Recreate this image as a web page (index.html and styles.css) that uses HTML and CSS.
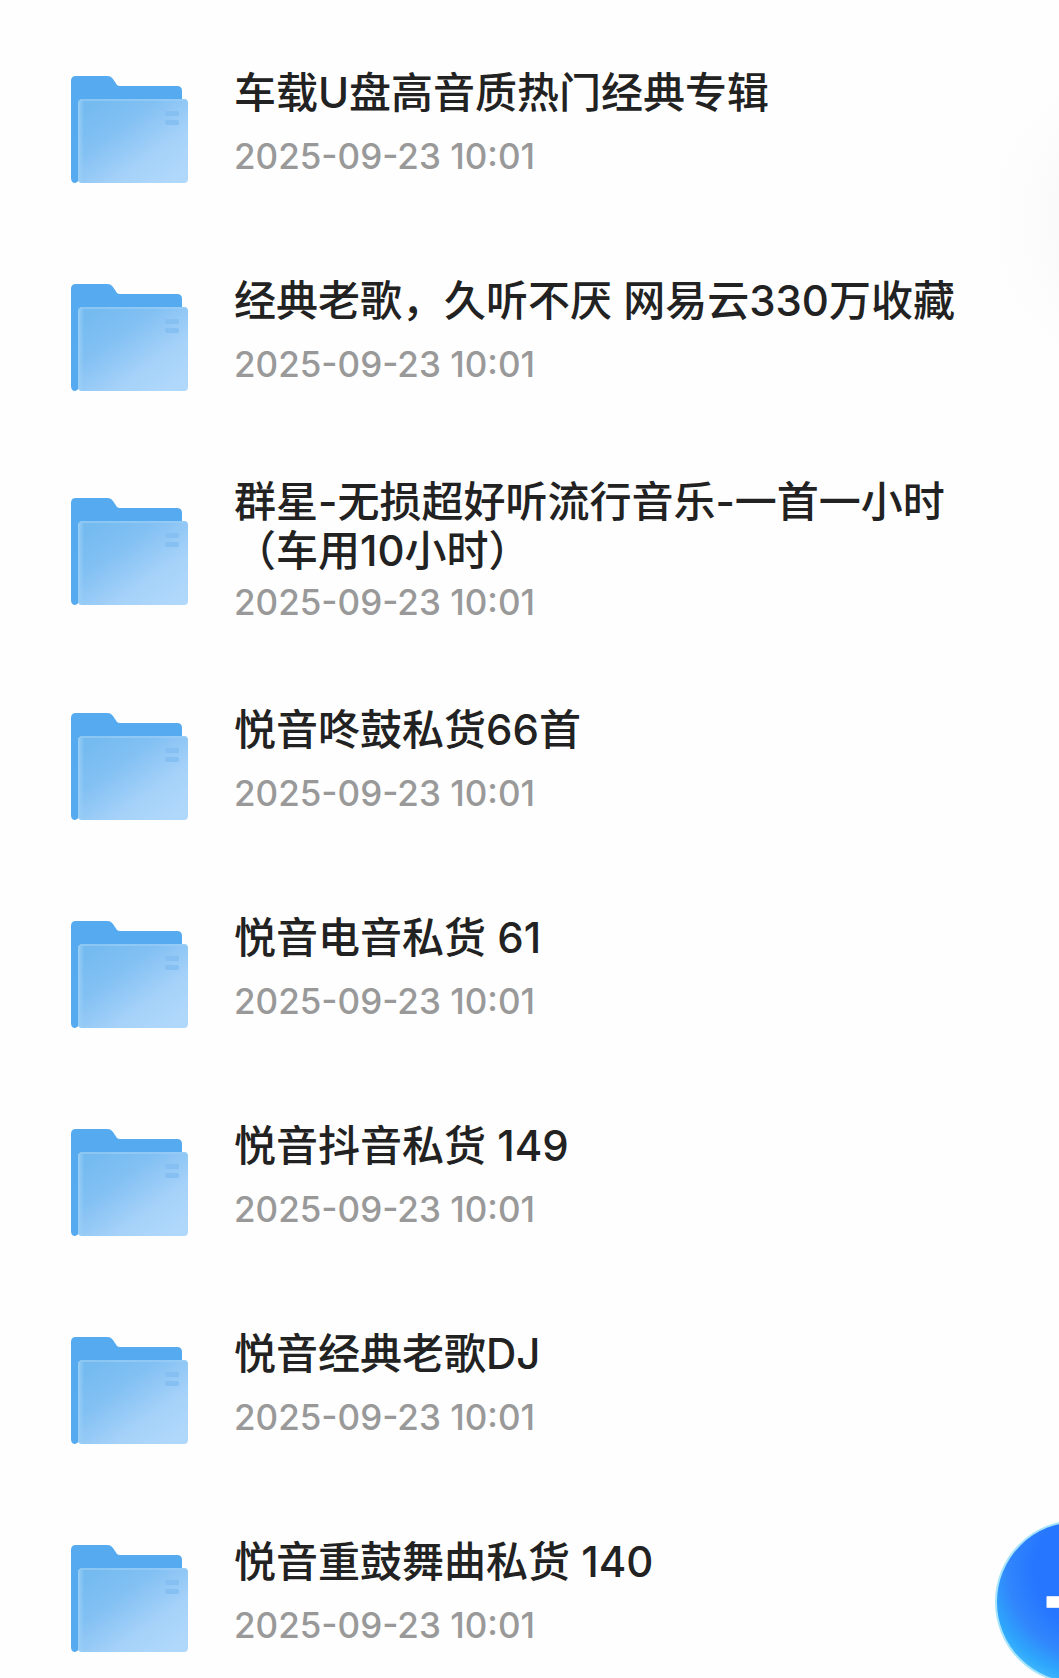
FILE: index.html
```html
<!DOCTYPE html>
<html lang="zh-CN">
<head>
  <meta charset="UTF-8">
  <meta name="viewport" content="width=device-width, initial-scale=1.0">
  <title>我的文件</title>
  <link rel="stylesheet" href="styles.css">
</head>
<body>
  <!-- Folder icon, reused by every row -->
  <svg class="sprite" aria-hidden="true">
    <defs>
      <linearGradient id="front" x1="0.05" y1="0.15" x2="0.85" y2="1">
        <stop offset="0" stop-color="#75bbf0"/>
        <stop offset="0.3" stop-color="#82c0f3"/>
        <stop offset="0.7" stop-color="#a6d2f9"/>
        <stop offset="1" stop-color="#b0d8fb"/>
      </linearGradient>
      <linearGradient id="edge" x1="0" y1="0" x2="1" y2="0">
        <stop offset="0" stop-color="#9bcff6"/>
        <stop offset="1" stop-color="#9bcff6" stop-opacity="0"/>
      </linearGradient>
    </defs>
    <symbol id="folder" viewBox="0 0 117 107">
      <path d="M5 0H37Q40 0 42 3L46 9Q47 10 49 10H106Q111 10 111 15V60H8V103Q7 107 3 107Q0 106 0 102V5Q0 0 5 0Z" fill="#56aaef"/>
      <rect x="7" y="23" width="110" height="84" rx="4" fill="url(#front)"/>
      <rect x="7" y="24" width="6" height="82" rx="3" fill="url(#edge)"/>
      <rect x="9" y="23" width="106" height="2" rx="1" fill="#9bcff6" opacity="0.6"/>
      <rect x="94" y="35" width="14" height="5" rx="2" fill="#86bff1"/>
      <rect x="94" y="44" width="14" height="5" rx="2" fill="#86bff1"/>
    </symbol>
  </svg>

  <main class="page">
    <ul class="file-list">
      <li>
        <a href="#" class="file">
          <svg class="icon"><use href="#folder"/></svg>
          <div class="info">
            <h2 class="name">车载U盘高音质热门经典专辑</h2>
            <time class="date">2025-09-23 10:01</time>
          </div>
        </a>
      </li>
      <li>
        <a href="#" class="file">
          <svg class="icon"><use href="#folder"/></svg>
          <div class="info">
            <h2 class="name">经典老歌，久听不厌 网易云330万收藏</h2>
            <time class="date">2025-09-23 10:01</time>
          </div>
        </a>
      </li>
      <li>
        <a href="#" class="file two-lines">
          <svg class="icon"><use href="#folder"/></svg>
          <div class="info">
            <h2 class="name">群星-无损超好听流行音乐-一首一小时（车用10小时）</h2>
            <time class="date">2025-09-23 10:01</time>
          </div>
        </a>
      </li>
      <li>
        <a href="#" class="file">
          <svg class="icon"><use href="#folder"/></svg>
          <div class="info">
            <h2 class="name">悦音咚鼓私货66首</h2>
            <time class="date">2025-09-23 10:01</time>
          </div>
        </a>
      </li>
      <li>
        <a href="#" class="file">
          <svg class="icon"><use href="#folder"/></svg>
          <div class="info">
            <h2 class="name">悦音电音私货 61</h2>
            <time class="date">2025-09-23 10:01</time>
          </div>
        </a>
      </li>
      <li>
        <a href="#" class="file">
          <svg class="icon"><use href="#folder"/></svg>
          <div class="info">
            <h2 class="name">悦音抖音私货 149</h2>
            <time class="date">2025-09-23 10:01</time>
          </div>
        </a>
      </li>
      <li>
        <a href="#" class="file">
          <svg class="icon"><use href="#folder"/></svg>
          <div class="info">
            <h2 class="name">悦音经典老歌DJ</h2>
            <time class="date">2025-09-23 10:01</time>
          </div>
        </a>
      </li>
      <li>
        <a href="#" class="file">
          <svg class="icon"><use href="#folder"/></svg>
          <div class="info">
            <h2 class="name">悦音重鼓舞曲私货 140</h2>
            <time class="date">2025-09-23 10:01</time>
          </div>
        </a>
      </li>
    </ul>
  </main>

  <!-- Add button, half off the right edge -->
  <button class="add-button" aria-label="添加">
    <svg class="plus" viewBox="0 0 60 60"><path d="M1 25H25V1H35V25H59V35H35V59H25V35H1Z" fill="#fff" stroke="#fff" stroke-width="1" stroke-linejoin="round"/></svg>
  </button>
</body>
</html>
```
FILE: styles.css
```css
* {
  margin: 0;
  padding: 0;
  box-sizing: border-box;
}

body {
  background: #fefefe;
  font-family: Inter, "Noto Sans CJK SC", sans-serif;
  overflow: hidden;
}

.sprite {
  position: absolute;
  width: 0;
  height: 0;
}

.page {
  min-height: 100vh;
  padding-top: 25px;
  /* soft grey glow on the right */
  background: radial-gradient(circle at calc(100% + 90px) 220px, #f5f5f5 0, #fafafa 90px, #fefefe 160px);
}

.file-list {
  list-style: none;
}

.file {
  display: flex;
  align-items: center;
  gap: 46px;
  min-height: 208px;
  padding: 0 84px 0 71px;
  color: #222;
  text-decoration: none;
}

.icon {
  flex: none;
  width: 117px;
  height: 107px;
}

.info {
  flex: 1;
  padding-bottom: 14px;
}

.name {
  font-size: 42px;
  font-weight: 500;
  line-height: 49px;
}

.date {
  display: block;
  margin-top: 19px;
  font-size: 35px;
  font-weight: 500;
  line-height: 40px;
  color: #999;
}

.two-lines {
  min-height: 221px;
}

.two-lines .info {
  padding-bottom: 4px;
}

.two-lines .date {
  margin-top: 7px;
}

.add-button {
  position: fixed;
  right: -100px;
  bottom: -6px;
  display: flex;
  align-items: center;
  justify-content: center;
  width: 164px;
  height: 164px;
  border: 2px solid #a5e4fa;
  border-radius: 50%;
  background: radial-gradient(circle at 60% 30%, #2676ff 0, #2676ff 40%, #3186fc 58%, #2ea6fc 72%, #4cc4fd 85%);
  cursor: pointer;
}

.plus {
  width: 62px;
  height: 62px;
}
```
